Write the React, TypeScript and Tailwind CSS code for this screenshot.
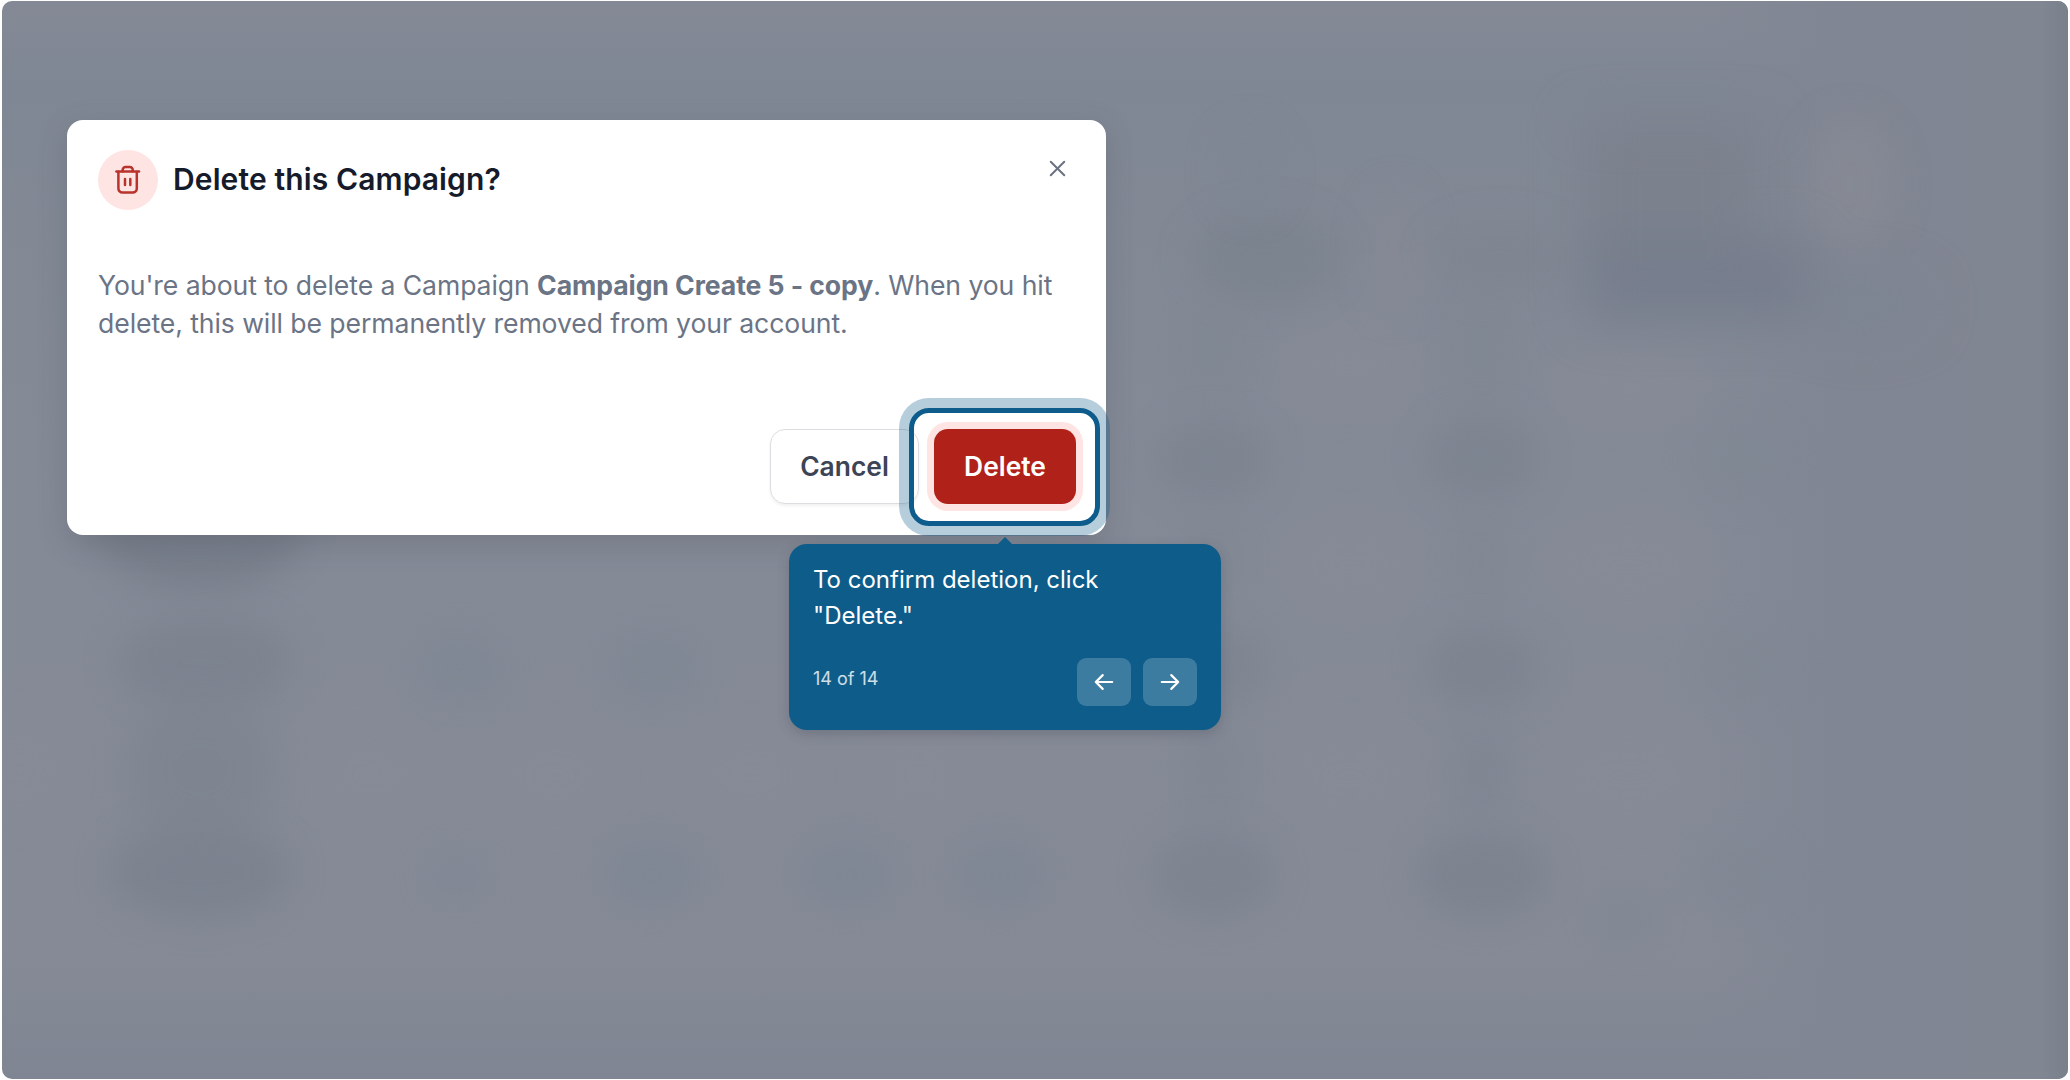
import React from "react";
import { X } from "lucide-react";

// cx, cy, rx, ry, color, opacity
type Blob = [number, number, number, number, string, number];

const blobs: Blob[] = [
  [200, 530, 104, 60, "#6f7783", 0.6],
  [205, 662, 88, 48, "#7a828e", 0.75],
  [200, 770, 74, 70, "#7c848f", 0.7],
  [200, 872, 92, 48, "#79818d", 0.75],
  [460, 667, 44, 32, "#7c8693", 0.6],
  [655, 667, 46, 32, "#7c8693", 0.6],
  [455, 877, 28, 18, "#7c8693", 0.7],
  [652, 875, 48, 32, "#7c8693", 0.65],
  [847, 875, 48, 32, "#7c8693", 0.65],
  [1000, 875, 48, 32, "#7c8693", 0.65],
  [1265, 258, 72, 44, "#79828d", 0.75],
  [1250, 170, 28, 40, "#7d8693", 0.6],
  [1212, 350, 32, 46, "#7e8790", 0.6],
  [1213, 460, 56, 40, "#7b838f", 0.75],
  [1213, 560, 28, 44, "#7e8792", 0.6],
  [1213, 667, 56, 40, "#7b838f", 0.65],
  [1213, 770, 28, 46, "#7e8792", 0.7],
  [1213, 875, 62, 44, "#7b838f", 0.75],
  [1482, 350, 30, 50, "#7e8790", 0.6],
  [1482, 458, 56, 42, "#7b838f", 0.75],
  [1482, 560, 26, 44, "#7e8792", 0.6],
  [1482, 667, 58, 40, "#7b838f", 0.75],
  [1482, 770, 28, 46, "#7d8591", 0.7],
  [1482, 875, 66, 44, "#7a828e", 0.75],
  [1500, 258, 66, 34, "#7d8590", 0.75],
  [1740, 460, 50, 44, "#7f8894", 0.6],
  [1740, 667, 50, 40, "#7f8894", 0.6],
  [1740, 875, 50, 40, "#7f8894", 0.6],
  [1625, 920, 36, 30, "#7f8793", 0.6],
];

const lightBlobs: Blob[] = [
  [20, 770, 50, 54, "#888b98", 0.6],
  [370, 775, 58, 46, "#888b97", 0.6],
  [555, 775, 62, 46, "#888b97", 0.6],
  [750, 775, 62, 46, "#888b97", 0.6],
  [920, 775, 56, 46, "#888b97", 0.6],
  [1350, 365, 70, 48, "#888b97", 0.6],
  [1350, 565, 70, 48, "#888b97", 0.6],
  [1350, 775, 70, 48, "#888b97", 0.6],
  [1630, 385, 80, 36, "#888b97", 0.6],
  [1630, 565, 80, 48, "#888b97", 0.6],
  [1630, 775, 80, 48, "#888b97", 0.6],
  [1395, 250, 26, 60, "#888a95", 0.5],
  [1850, 185, 44, 66, "#888b95", 0.7],
];

const Backdrop = () => (
  <svg
    className="absolute inset-0 h-full w-full"
    viewBox="0 0 2070 1080"
    preserveAspectRatio="none"
    aria-hidden="true"
  >
    <defs>
      <linearGradient id="base" x1="0" y1="0" x2="0" y2="1">
        <stop offset="0" stopColor="#848995" />
        <stop offset="0.08" stopColor="#7f8794" />
        <stop offset="0.2" stopColor="#828995" />
        <stop offset="0.45" stopColor="#848a96" />
        <stop offset="0.88" stopColor="#858a96" />
        <stop offset="1" stopColor="#7f8592" />
      </linearGradient>
      <linearGradient id="side" x1="0" y1="0" x2="1" y2="0">
        <stop offset="0" stopColor="#808693" stopOpacity="0" />
        <stop offset="0.35" stopColor="#808693" />
        <stop offset="0.92" stopColor="#808692" />
        <stop offset="1" stopColor="#7a808a" />
      </linearGradient>
      <filter
        id="soft"
        x="-80%"
        y="-100%"
        width="260%"
        height="300%"
        colorInterpolationFilters="sRGB"
      >
        <feGaussianBlur stdDeviation="18" />
      </filter>
      <filter
        id="wide"
        x="-60%"
        y="-60%"
        width="220%"
        height="220%"
        colorInterpolationFilters="sRGB"
      >
        <feGaussianBlur stdDeviation="24" />
      </filter>
    </defs>
    <rect width="2070" height="1080" fill="url(#base)" />
    <rect x="1700" width="370" height="1080" fill="url(#side)" />
    {[...lightBlobs, ...blobs].map(([cx, cy, rx, ry, fill, opacity], i) => (
      <ellipse
        key={i}
        cx={cx}
        cy={cy}
        rx={rx}
        ry={ry}
        fill={fill}
        opacity={opacity}
        filter="url(#soft)"
      />
    ))}
    <g filter="url(#wide)">
      <rect x="1584" y="120" width="175" height="170" fill="#7b818d" />
      <rect x="1584" y="240" width="225" height="80" rx="20" fill="#767d8c" />
      <ellipse cx="1865" cy="305" rx="60" ry="30" fill="#7d8592" />
    </g>
  </svg>
);

const TrashIcon = () => (
  <svg
    width="28"
    height="32"
    viewBox="0 0 28 32"
    fill="none"
    stroke="#b8332b"
    strokeWidth="2.5"
    strokeLinecap="round"
    strokeLinejoin="round"
  >
    <path d="M2.4 7.6h22.6" />
    <path d="M8.6 7.2V6a3 3 0 0 1 3-3h4.2a3 3 0 0 1 3 3v1.2" />
    <path d="M4.4 8v16.6a4 4 0 0 0 4 4h10.4a4 4 0 0 0 4-4V8" />
    <path d="M11 15v6M16.3 15v6" />
  </svg>
);

const Arrow = ({ className }: { className?: string }) => (
  <svg
    className={className}
    width="20"
    height="18"
    viewBox="0 0 20 18"
    fill="none"
    stroke="currentColor"
    strokeWidth="2.2"
    strokeLinecap="round"
    strokeLinejoin="round"
  >
    <path d="M1.8 9h16.4M11.3 2.1L18.2 9l-6.9 6.9" />
  </svg>
);

const DeleteDialog = () => (
  <div
    role="dialog"
    className="relative flex h-[415px] w-[1039px] flex-col rounded-2xl bg-white px-[31px] pt-[30px] shadow-[0_8px_28px_rgba(70,76,88,0.25)]"
  >
    <div className="flex justify-between">
      <div className="flex items-center gap-[15px]">
        <div className="flex size-[60px] items-center justify-center rounded-full bg-[#fee4e2]">
          <TrashIcon />
        </div>
        <h2 className="relative -top-px text-[30px] leading-10 font-semibold tracking-[0.12px] text-[#161b2b]">
          Delete this Campaign?
        </h2>
      </div>
      <button className="mt-1 mr-1 flex size-7 items-center justify-center text-[#6b7280]">
        <X size={27} strokeWidth={1.8} />
      </button>
    </div>

    <p className="mt-14 text-[26.6px] leading-[38px] tracking-[-0.08px] whitespace-nowrap text-[#6b7485]">
      You're about to delete a Campaign{" "}
      <b className="font-bold">Campaign Create 5 - copy</b>. When you hit
      <br />
      delete, this will be permanently removed from your account.
    </p>

    <div className="-mr-px mt-auto mb-[31px] flex justify-end gap-[15px] text-[26.4px] font-semibold">
      <button className="h-[75px] w-[149px] rounded-[15px] border border-[#dcdde0] text-[#3c4455] shadow-[0_2px_3px_rgba(16,24,40,0.06)]">
        Cancel
      </button>
      <button className="h-[75px] w-[142px] rounded-[14px] bg-[#b02119] text-white shadow-[0_0_0_7px_#fee4e2]">
        Delete
      </button>
    </div>

    {/* Highlight */}
    <div className="absolute top-[288px] left-[842px] h-[118px] w-[191px] rounded-[20px] border-5 border-[#0d5c8b] shadow-[0_0_0_10px_rgba(13,92,139,0.3)]" />
  </div>
);

const StepTooltip = () => (
  <div className="absolute top-[544px] left-[789px] flex h-[186px] w-[432px] flex-col justify-between rounded-[18px] bg-[#0d5c8a] px-6 pt-[18px] pb-6 text-white shadow-[0_4px_12px_rgba(70,70,85,0.3)]">
    <svg className="absolute -top-[7px] left-[208px]" width="16" height="8">
      <path d="M0 8L8 0l8 8z" fill="#0d5c8a" />
    </svg>
    <p className="text-2xl leading-9">
      To confirm deletion, click
      <br />
      "Delete."
    </p>
    <div className="flex items-start justify-between">
      <span className="mt-[7px] text-lg text-white/80">14 of 14</span>
      <div className="flex gap-3">
        <button className="flex h-12 w-[54px] items-center justify-center rounded-[9px] bg-white/20">
          <Arrow className="rotate-180" />
        </button>
        <button className="flex h-12 w-[54px] items-center justify-center rounded-[9px] bg-white/20">
          <Arrow />
        </button>
      </div>
    </div>
  </div>
);

const App = () => {
  return (
    <div className="h-[1080px] w-[2070px] bg-white font-['Inter',sans-serif]">
      <div className="relative h-full w-full pt-[120px] pl-[67px] [clip-path:inset(1px_2px_1px_2px_round_10px)]">
        <Backdrop />
        <DeleteDialog />
        <StepTooltip />
      </div>
    </div>
  );
};

export default App;
